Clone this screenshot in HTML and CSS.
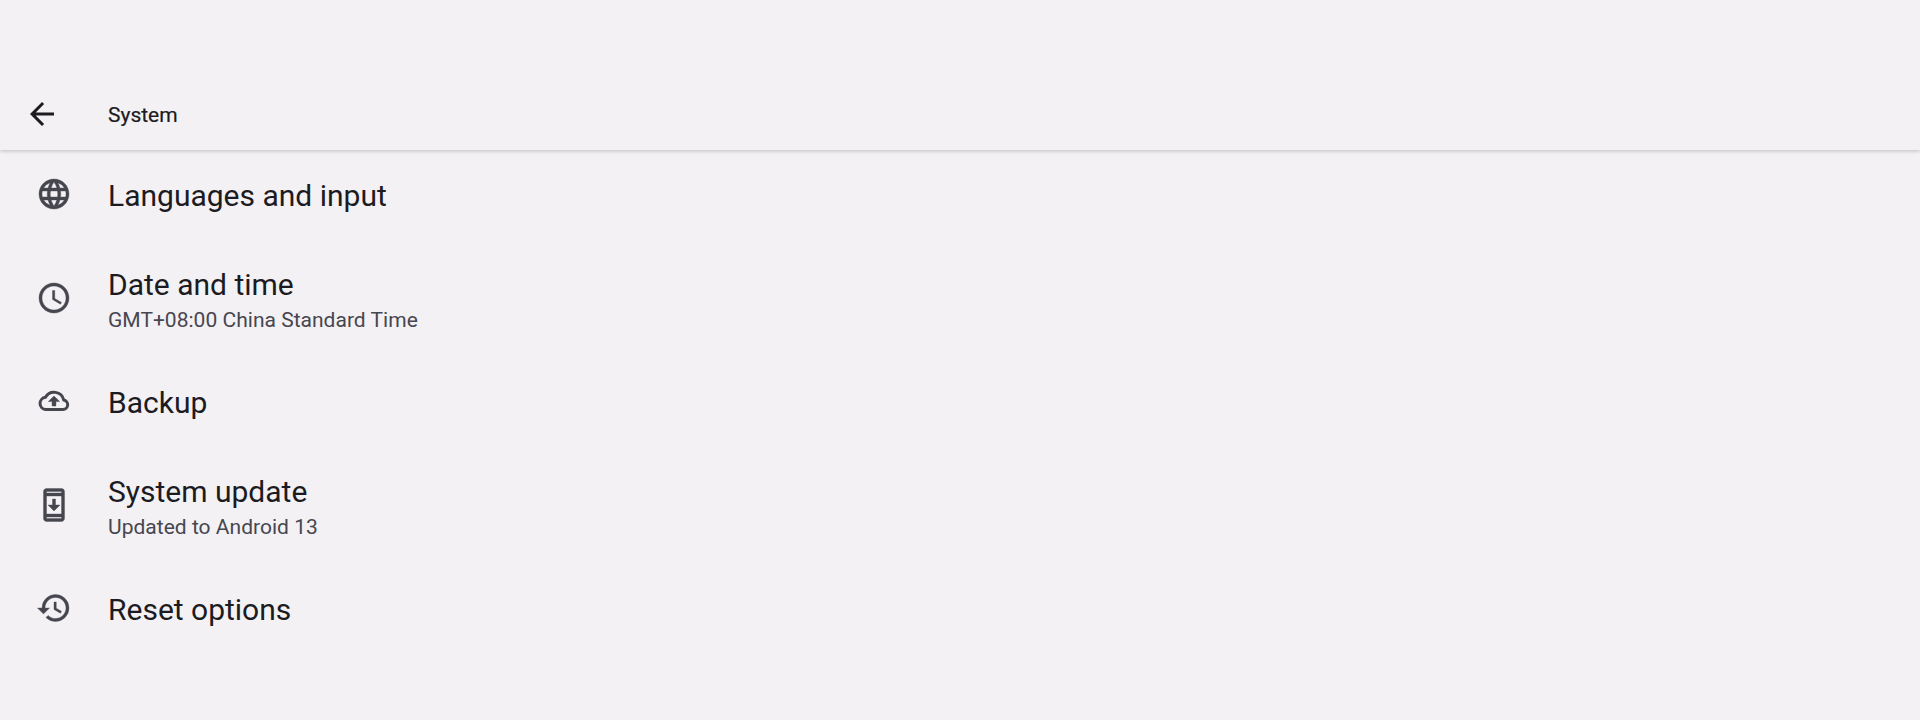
FILE: index.html
```html
<!DOCTYPE html>
<html lang="en">
<head>
<meta charset="utf-8">
<title>System</title>
<link rel="stylesheet" href="styles.css">
</head>
<body>
<header class="appbar">
  <svg class="back" viewBox="0 0 24 24"><path d="M20 11H7.83l5.59-5.59L12 4l-8 8 8 8 1.41-1.41L7.83 13H20v-2z"/></svg>
  <h1 class="appbar-title">System</h1>
</header>
<main class="list">
  <div class="row">
    <svg class="icon" viewBox="0 0 24 24"><path d="M12 2C6.48 2 2 6.48 2 12s4.48 10 10 10 10-4.48 10-10S17.52 2 12 2zm6.93 6h-2.95a15.65 15.65 0 0 0-1.38-3.56A8.03 8.03 0 0 1 18.92 8zM12 4.04c.83 1.2 1.48 2.53 1.91 3.96h-3.82c.43-1.43 1.08-2.76 1.91-3.96zM4.26 14C4.1 13.36 4 12.69 4 12s.1-1.36.26-2h3.38c-.08.66-.14 1.32-.14 2s.06 1.34.14 2H4.26zm.82 2h2.95c.32 1.25.78 2.45 1.38 3.56A7.987 7.987 0 0 1 5.08 16zm2.95-8H5.08a7.987 7.987 0 0 1 4.33-3.56A15.65 15.65 0 0 0 8.03 8zM12 19.96c-.83-1.2-1.48-2.53-1.91-3.96h3.82c-.43 1.43-1.08 2.76-1.91 3.96zM14.34 14H9.66c-.09-.66-.16-1.32-.16-2s.07-1.35.16-2h4.68c.09.65.16 1.32.16 2s-.07 1.34-.16 2zm.25 5.56c.6-1.11 1.06-2.31 1.38-3.56h2.95a8.03 8.03 0 0 1-4.33 3.56zM16.36 14c.08-.66.14-1.32.14-2s-.06-1.34-.14-2h3.38c.16.64.26 1.31.26 2s-.1 1.36-.26 2h-3.38z"/></svg>
    <div class="text"><div class="title">Languages and input</div></div>
  </div>
  <div class="row row-double">
    <svg class="icon" viewBox="0 0 24 24"><path d="M11.99 2C6.47 2 2 6.48 2 12s4.47 10 9.99 10C17.52 22 22 17.52 22 12S17.52 2 11.99 2zM12 20c-4.42 0-8-3.58-8-8s3.58-8 8-8 8 3.58 8 8-3.58 8-8 8zm.5-13H11v6l5.25 3.15.75-1.23-4.5-2.67V7z"/></svg>
    <div class="text"><div class="title">Date and time</div><div class="sub">GMT+08:00 China Standard Time</div></div>
  </div>
  <div class="row">
    <svg class="icon" viewBox="0 0 24 24"><path class="cloud" d="M6.4 17.7H18a3.2 3.2 0 0 0 .5-6.35A6.6 6.6 0 0 0 6.3 9.55 4.1 4.1 0 0 0 6.4 17.7z"/><path d="M8.2 12.4 12 8.7l3.8 3.7h-2.5v3h-2.6v-3z"/></svg>
    <div class="text"><div class="title">Backup</div></div>
  </div>
  <div class="row row-double">
    <svg class="icon" viewBox="0 0 24 24"><path d="M17 1.01 7 1c-1.1 0-2 .9-2 2v18c0 1.1.9 2 2 2h10c1.1 0 2-.9 2-2V3c0-1.1-.9-1.99-2-1.99zM17 21H7v-1h10v1zm0-3H7V6h10v12zM7 4V3h10v1H7zm9 8h-3V8h-2v4H8l4 4 4-4z"/></svg>
    <div class="text"><div class="title">System update</div><div class="sub">Updated to Android 13</div></div>
  </div>
  <div class="row">
    <svg class="icon" viewBox="0 0 24 24"><path d="M13 3a9 9 0 0 0-9 9H1l3.89 3.89.07.14L9 12H6c0-3.87 3.13-7 7-7s7 3.13 7 7-3.13 7-7 7c-1.93 0-3.68-.79-4.94-2.06l-1.42 1.42A8.954 8.954 0 0 0 13 21a9 9 0 0 0 0-18zm-1 5v5l4.25 2.52.77-1.28-3.52-2.09V8H12z"/></svg>
    <div class="text"><div class="title">Reset options</div></div>
  </div>
</main>
</body>
</html>
```
FILE: styles.css
```css
html, body {
  margin: 0;
  height: 100%;
}
body {
  background: #f3f1f4;
  font-family: Roboto, "Noto Sans", sans-serif;
  overflow: hidden;
}
.appbar {
  height: 150px;
  box-sizing: border-box;
  padding: 77px 0 0 24px;
  display: flex;
  align-items: center;
  box-shadow: 0 1px 4px rgba(0, 0, 0, 0.22);
}
.back {
  width: 36px;
  height: 36px;
  fill: #1c1b1f;
  margin-right: 48px;
}
.appbar-title {
  margin: 2px 0 0;
  font-size: 21px;
  font-weight: 400;
  -webkit-text-stroke: 0.2px #1c1b1f;
  color: #1c1b1f;
}
.list {
  display: flex;
  flex-direction: column;
  padding-top: 1px;
}
.row {
  height: 88px;
  display: flex;
  align-items: center;
  padding-left: 36px;
}
.row-double {
  height: 119px;
}
.icon {
  width: 36px;
  height: 36px;
  fill: #46464f;
  stroke: #46464f;
  stroke-width: 0.25;
  margin: -2px 36px 0 0;
  flex: none;
}
.cloud {
  fill: none;
  stroke-width: 2;
}
.text {
  padding-top: 2px;
}
.title {
  font-size: 30px;
  line-height: 40px;
  color: #1c1b1f;
}
.sub {
  font-size: 21px;
  line-height: 30px;
  letter-spacing: 0.02px;
  color: #46464f;
}
```
